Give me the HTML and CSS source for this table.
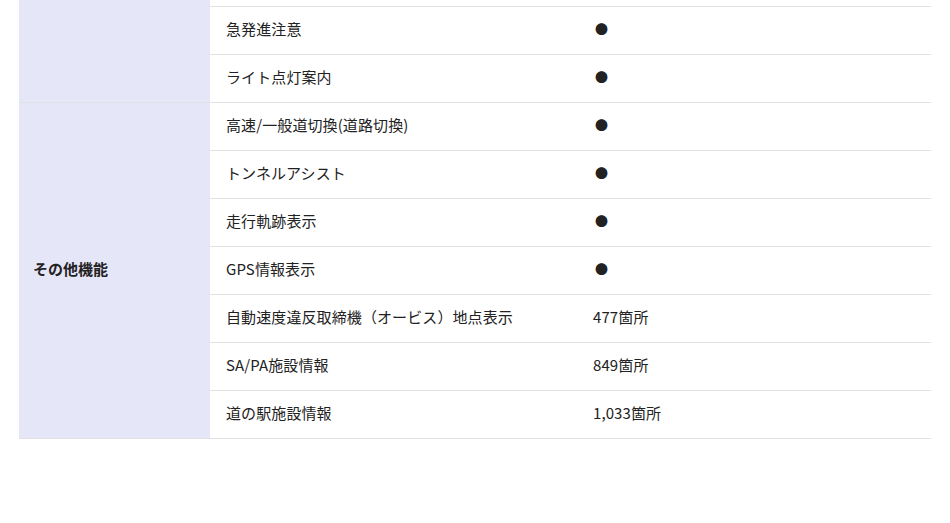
FILE: index.html
```html
<!DOCTYPE html>
<html lang="ja">
<head>
<meta charset="utf-8">
<link rel="stylesheet" href="styles.css">
</head>
<body>
<div class="wrap">
<table class="spec">
  <colgroup><col class="c1"><col class="c2"><col class="c3"></colgroup>
  <tbody>
    <tr class="cut"><th rowspan="3" class="grp"></th><td></td><td></td></tr>
    <tr><td>急発進注意</td><td><span class="dot">●</span></td></tr>
    <tr><td>ライト点灯案内</td><td><span class="dot">●</span></td></tr>
    <tr><th rowspan="7" class="grp">その他機能</th><td>高速/一般道切換(道路切換)</td><td><span class="dot">●</span></td></tr>
    <tr><td>トンネルアシスト</td><td><span class="dot">●</span></td></tr>
    <tr><td>走行軌跡表示</td><td><span class="dot">●</span></td></tr>
    <tr><td>GPS情報表示</td><td><span class="dot">●</span></td></tr>
    <tr><td>自動速度違反取締機（オービス）地点表示</td><td>477箇所</td></tr>
    <tr><td>SA/PA施設情報</td><td>849箇所</td></tr>
    <tr><td>道の駅施設情報</td><td>1,033箇所</td></tr>
  </tbody>
</table>
</div>
</body>
</html>
```
FILE: styles.css
```css
html, body { margin: 0; padding: 0; background: #fff; }
body {
  font-family: "Noto Sans CJK JP", "Noto Sans", sans-serif;
  font-size: 15px;
  color: #222;
}
.wrap { padding-left: 19px; width: 912px; }
.spec { width: 912px; border-collapse: collapse; table-layout: fixed; }
.c1 { width: 191px; }
.c2 { width: 367px; }
.c3 { width: 354px; }
.spec th, .spec td {
  border-bottom: 1px solid #e2e2e2;
  height: 43px;
  padding: 0 0 4px 15px;
  vertical-align: middle;
  text-align: left;
  line-height: 20px;
}
.spec td { padding-left: 16px; letter-spacing: 0.1px; }
.spec td + td { padding-left: 16px; }
.spec th.grp {
  background: #e6e6f9;
  font-weight: bold;
  padding-left: 14px;
}
.spec tr.cut td { height: 6px; padding: 0; }
.dot { font-size: 13px; margin-left: 2px; }
```
